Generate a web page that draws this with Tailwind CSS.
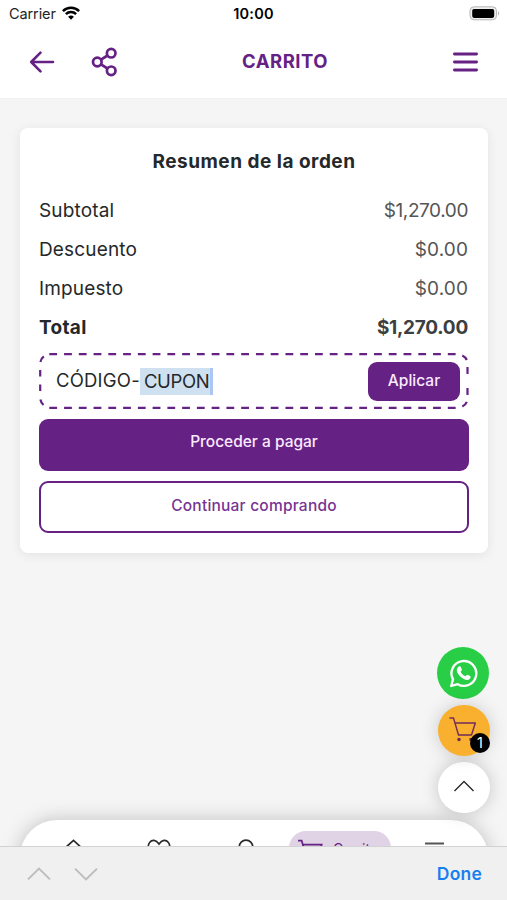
<!DOCTYPE html>
<html lang="es">
<head>
<meta charset="utf-8">
<meta name="viewport" content="width=device-width, initial-scale=1">
<title>Carrito</title>
<script src="https://cdn.jsdelivr.net/npm/@tailwindcss/browser@4"></script>
</head>
<body class="bg-[#f5f5f5]">
<div class="relative flex h-[900px] w-[507px] flex-col overflow-hidden font-['Inter',sans-serif] text-[#25282a]">
  <header class="h-[98px] shrink-0 bg-white shadow-[0_0_2px_rgba(0,0,0,.06)]">
    <div class="grid h-7 grid-cols-3 items-center pl-[9px] pr-[6px] text-[14.5px] leading-7 text-[#222]">
      <div class="flex items-center gap-[6px]"><span class="tracking-[-0.1px]">Carrier</span>
        <svg class="mt-[-2px] h-[14px] w-[18px]" viewBox="0 0 18 14" fill="none" stroke="#000" stroke-width="2.5"><path d="M.9 5.1a11.6 11.6 0 0 1 16.2 0M3.9 8.2a7.2 7.2 0 0 1 10.2 0"/><path d="M9 13.7 6.1 10.8a4.2 4.2 0 0 1 5.8 0Z" fill="#000" stroke="none"/></svg>
      </div>
      <div class="pr-[3px] text-center font-semibold text-black"><span class="tracking-[0.2px]">10:00</span></div>
      <svg class="h-4 w-[32px] justify-self-end" viewBox="0 0 32 16"><rect x="1" y=".8" width="26.5" height="13" rx="4" fill="#eee" stroke="#b5b5b5"/><rect x="3.2" y="2.9" width="22" height="9" rx="1.8" fill="#000"/><path d="M29 5q2.4 2.3 0 4.8Z" fill="#b5b5b5"/></svg>
    </div>
    <div class="flex h-[67px] items-center pl-[29px] pr-[29px]">
      <svg class="h-[26px] w-[26px]" viewBox="0 0 26 26" fill="none" stroke="#652184" stroke-width="2.6" stroke-linecap="round" stroke-linejoin="round"><path d="M24 13H2.2M11.5 3.7 2.2 13l9.3 9.3"/></svg>
      <svg class="ml-[36px] h-[30px] w-[27px]" viewBox="0 0 27 30" fill="none" stroke="#652184" stroke-width="2.7"><circle cx="6.3" cy="15" r="4.3"/><circle cx="20.2" cy="6.2" r="4.3"/><circle cx="20.2" cy="23.8" r="4.3"/><path d="m10 12.7 6.5-4.2M10 17.3l6.5 4.2"/></svg>
      <h1 class="ml-[124px] w-[88px] text-[18.5px] font-bold tracking-[0.5px] whitespace-nowrap text-[#652184]">CARRITO</h1>
      <svg class="ml-auto h-[22px] w-[25px]" viewBox="0 0 25 22" stroke="#652184" stroke-width="2.8" stroke-linecap="round"><path d="M1.4 3h22.2M1.4 11h22.2M1.4 19h22.2"/></svg>
    </div>
  </header>

  <main class="px-5 pr-[19px] pt-[30px]">
    <section class="flex h-[425px] flex-col rounded-[8px] bg-white pl-[19px] pr-[19px] pt-[19px] shadow-[0_2px_12px_rgba(0,0,0,.08)]">
      <h2 class="text-center text-[19px] leading-[29px] font-bold tracking-[0.5px]"><span>Resumen de la orden</span></h2>
      <dl class="mt-[15px] text-[19px] leading-[39px]">
        <div class="flex justify-between"><dt class="tracking-[0.15px]">Subtotal</dt><dd class="pr-[1px] tracking-[-0.4px] text-[#555]">$1,270.00</dd></div>
        <div class="flex justify-between"><dt class="tracking-[0.15px]">Descuento</dt><dd class="pr-[1px] tracking-[0.1px] text-[#555]">$0.00</dd></div>
        <div class="flex justify-between"><dt class="tracking-[0.15px]">Impuesto</dt><dd class="pr-[1px] tracking-[0.1px] text-[#555]">$0.00</dd></div>
        <div class="flex justify-between font-bold"><dt class="tracking-[0.3px]">Total</dt><dd class="pr-[1px] tracking-[-0.25px] text-[#3c3f41]">$1,270.00</dd></div>
      </dl>
      <div class="relative mt-[6px] flex h-[56px] shrink-0 items-center justify-between pl-[17px] pr-[9px]">
        <svg class="absolute inset-0 h-[56px] w-[430px]" viewBox="0 0 430 56" fill="none" stroke="#652184" stroke-width="2.2"><path d="M10.3 1.1H420M10.3 54.8H420" stroke-dasharray="7.8 6.96"/><path d="M1.2 17v6.5M1.2 31.5v6.5M428.5 14v7M428.5 35v7M1.4 9Q2 5.7 4.8 3.4M1.4 46.5Q2 49.8 4.5 52M423.3 2.4q3.4 1.6 4.5 4.6M423.3 53.5q3.4-1.6 4.5-4.6"/></svg>
        <div class="flex h-[27px] items-center text-[18.5px] whitespace-nowrap"><span class="relative z-10 w-[84px] tracking-[0.2px]">CÓDIGO-</span><span class="h-[27px] w-[73px] border-r-[3px] border-[#adc5f3] bg-[#cfe0f0] pl-[4px] leading-[26px] tracking-[-0.4px]">CUPON</span></div>
        <button class="h-[39px] w-[92px] rounded-[9px] bg-[#652184] text-[15.5px] font-medium text-[#fbeaff]"><span>Aplicar</span></button>
      </div>
      <button class="mt-[10px] h-[52px] shrink-0 rounded-[9px] bg-[#652184] pb-[7px] text-[15.5px] font-medium text-[#fbeaff]"><span>Proceder a pagar</span></button>
      <button class="mt-[10px] h-[52px] shrink-0 rounded-[9px] border-2 border-[#652184] pb-[2px] text-[15.5px] font-medium tracking-[0.22px] text-[#773493]"><span>Continuar comprando</span></button>
    </section>
  </main>

  <nav class="absolute top-[820px] left-5 h-[60px] w-[468px] rounded-t-[37px] bg-white shadow-[0_0_20px_rgba(0,0,0,.22)]">
    <div class="flex items-start pt-[11px]">
      <svg class="mt-[8px] ml-[43px] h-[26px] w-[22px]" viewBox="0 0 22 26" fill="none" stroke="#292929" stroke-width="1.7"><path d="m1 10 9.5-8.7L20 10v14H1Z"/></svg>
      <svg class="mt-[8px] ml-[62px] h-[24px] w-[24px]" viewBox="0 0 24 24" fill="none" stroke="#292929" stroke-width="1.6"><path d="M12 5C9 .5 5 .4 2.6 3.5-2 9 7 18 12 22 17 18 26 9 21.4 3.5 19 .4 15 .5 12 5Z"/></svg>
      <svg class="mt-[8px] ml-[67px] h-[24px] w-[16px]" viewBox="0 0 16 24" fill="none" stroke="#292929" stroke-width="1.7"><circle cx="8" cy="8" r="6.8"/></svg>
      <div class="ml-[35px] flex h-[34px] w-[102px] items-start rounded-[18px] bg-[#e1d3e6] pt-[8px] pl-[9px]">
        <svg class="h-[24px] w-[25px]" viewBox="0 0 25 24" fill="none" stroke="#652184" stroke-width="1.7"><path d="M0 1.7h3.7L8 17h12l3.7-11.4H5"/></svg>
        <span class="ml-[10px] pt-[1px] text-[14px] leading-[17px] text-[#652184]">Carrito</span>
      </div>
      <svg class="mt-[11px] ml-[34px] h-[20px] w-[20px]" viewBox="0 0 20 20" stroke="#555" stroke-width="2.2"><path d="M0 1.5h19M0 9h19M0 16h19"/></svg>
    </div>
  </nav>

  <aside class="absolute top-[647px] left-[437px] flex flex-col gap-[6px]">
    <div class="flex h-[52px] w-[52px] items-center justify-center rounded-full bg-[#28cf46]">
      <svg class="h-[29px] w-[29px]" viewBox="0 0 29 29"><path d="M2.2 27 4 20.4a12.4 12.4 0 1 1 4.7 4.8Z" fill="none" stroke="#fff" stroke-width="2.3" stroke-linejoin="round"/><path d="M9.8 7.6c.6-.5 1.5-.6 1.9.2l1.1 2.7c.4 1-.8 1.6-1.2 2.3.9 2.1 2.6 3.6 4.8 4.5.7-.5 1.2-1.9 2-1.6l2.8 1.4c1 .6.1 2.5-.8 3.2-1.4 1-3.5.6-5.2-.1-3.2-1.3-6.3-4.4-7.2-7.6-.5-2 .2-3.8 1.8-5Z" fill="#fff"/></svg>
    </div>
    <div class="relative ml-[1px] h-[51px] w-[52px] rounded-full bg-[#f9b02e] shadow-[0_0_18px_rgba(0,0,0,.18)]">
      <svg class="absolute top-[12px] left-[11px] h-[26px] w-[28px]" viewBox="0 0 28 26" fill="none" stroke="#702b59" stroke-width="1.4" stroke-linejoin="round" stroke-linecap="round"><path d="M1 1h3.5l5 17h13l3.8-12H6"/><circle cx="10" cy="22.5" r="1.1" fill="#85203b"/><circle cx="22" cy="22.5" r="1.1" fill="#85203b"/></svg>
      <span class="absolute top-[28px] left-[32px] flex h-5 w-5 items-center justify-center rounded-full bg-black text-[14.5px] text-white">1</span>
    </div>
    <div class="ml-[1px] flex h-[51px] w-[52px] items-center justify-center rounded-full bg-white shadow-[0_0_18px_rgba(0,0,0,.2)]">
      <svg class="mt-[-4px] h-[14px] w-[22px]" viewBox="0 0 22 14" fill="none" stroke="#292929" stroke-width="1.4"><path d="m1.5 12 9.5-9.5 9.5 9.5"/></svg>
    </div>
  </aside>

  <footer class="absolute top-[846px] left-0 flex h-[54px] w-[507px] items-center border-t-[1.5px] border-[#d2d2d2] bg-[#f0f0f0] pl-[27px] pr-[25px]">
    <svg class="h-[14px] w-[24px]" viewBox="0 0 24 14" fill="none" stroke="#bcbcbc" stroke-width="1.9"><path d="M1 12.4 12 1.6l11 10.8"/></svg>
    <svg class="ml-[23px] h-[14px] w-[24px]" viewBox="0 0 24 14" fill="none" stroke="#bcbcbc" stroke-width="1.9"><path d="M1 1.6 12 12.4 23 1.6"/></svg>
    <button class="ml-auto pt-[2px] text-[17.5px] font-semibold tracking-[0.2px] text-[#187ff0]">Done</button>
  </footer>
</div>
</body>
</html>
